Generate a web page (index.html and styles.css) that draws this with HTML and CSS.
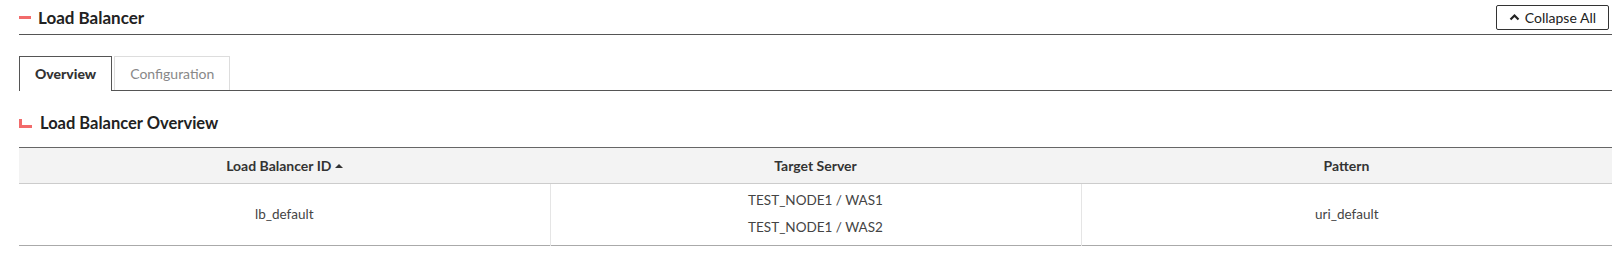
FILE: index.html
```html
<!DOCTYPE html>
<html lang="en">
<head>
  <meta charset="UTF-8">
  <title>Load Balancer</title>
  <link rel="stylesheet" href="styles.css">
</head>
<body>

<div class="page">
  <div class="panel-head">
    <h2 class="panel-title"><span class="dash"></span>Load Balancer</h2>
    <button class="collapse-btn">
      <svg width="11" height="8" viewBox="0 0 11 8"><path d="M1.5 6.5 L5.5 2.5 L9.5 6.5" fill="none" stroke="#222" stroke-width="2.2"/></svg>
      Collapse All
    </button>
  </div>

  <ul class="tabs">
    <li class="tab active">Overview</li>
    <li class="tab">Configuration</li>
  </ul>

  <h3 class="section-title"><span class="corner"></span>Load Balancer Overview</h3>

  <table class="grid">
    <thead>
      <tr>
        <th>Load Balancer ID <span class="sort-up"></span></th>
        <th>Target Server</th>
        <th>Pattern</th>
      </tr>
    </thead>
    <tbody>
      <tr>
        <td>lb_default</td>
        <td>
          <div class="line">TEST_NODE1 / WAS1</div>
          <div class="line">TEST_NODE1 / WAS2</div>
        </td>
        <td>uri_default</td>
      </tr>
    </tbody>
  </table>
</div>

</body>
</html>
```

FILE: styles.css
```css
body {
  margin: 0;
  font-family: Lato, "Noto Sans", sans-serif;
  color: #333;
  background: #fff;
}
.page {
  padding: 0 6px 0 19px;
}
.panel-head {
  display: flex;
  align-items: center;
  justify-content: space-between;
  height: 34px;
  border-bottom: 1px solid #555;
}
.panel-title {
  display: flex;
  align-items: center;
  margin: 0;
  font-size: 17px;
  font-weight: 700;
  color: #222;
}
.dash {
  display: inline-block;
  width: 12px;
  height: 3px;
  background: #f26b6b;
  margin-right: 7px;
}
.collapse-btn {
  display: flex;
  align-items: center;
  gap: 5px;
  height: 25px;
  margin-right: 3px;
  padding: 0 12px 0 12px;
  border: 1px solid #333;
  border-radius: 2px;
  background: #fff;
  font-family: inherit;
  font-size: 14px;
  color: #222;
}
.tabs {
  display: flex;
  gap: 2px;
  list-style: none;
  margin: 21px 0 0;
  padding: 0;
  border-bottom: 1px solid #555;
}
.tab {
  height: 33px;
  line-height: 33px;
  padding: 0 15px;
  border: 1px solid #ddd;
  border-bottom: none;
  font-size: 14px;
  color: #888;
}
.tab.active {
  border-color: #555;
  color: #333;
  font-weight: 900;
  background: #fff;
  margin-bottom: -1px;
  height: 34px;
}
.section-title {
  display: flex;
  align-items: center;
  margin: 20px 0 0;
  height: 24px;
  font-size: 16.5px;
  font-weight: 700;
  color: #222;
}
.corner {
  display: inline-block;
  width: 10px;
  height: 6px;
  border-left: 3px solid #f26b6b;
  border-bottom: 3px solid #f26b6b;
  margin-right: 8px;
  margin-top: 1px;
}
.grid {
  width: 100%;
  margin-top: 12px;
  border-collapse: collapse;
  table-layout: fixed;
  border-top: 1px solid #666;
  border-bottom: 1px solid #aaa;
}
.grid th {
  height: 35px;
  padding: 0 10px;
  background: #f3f3f3;
  border-bottom: 1px solid #ccc;
  font-size: 14px;
  font-weight: 700;
  color: #333;
}
.grid td {
  padding: 3px 10px 4px;
  text-align: center;
  font-size: 13.5px;
  color: #444;
  border-left: 1px solid #e5e5e5;
}
.grid td:first-child {
  border-left: none;
}
.grid .line {
  line-height: 27px;
}
.sort-up {
  display: inline-block;
  width: 0;
  height: 0;
  border-left: 4px solid transparent;
  border-right: 4px solid transparent;
  border-bottom: 4px solid #333;
  vertical-align: 3px;
}
```
